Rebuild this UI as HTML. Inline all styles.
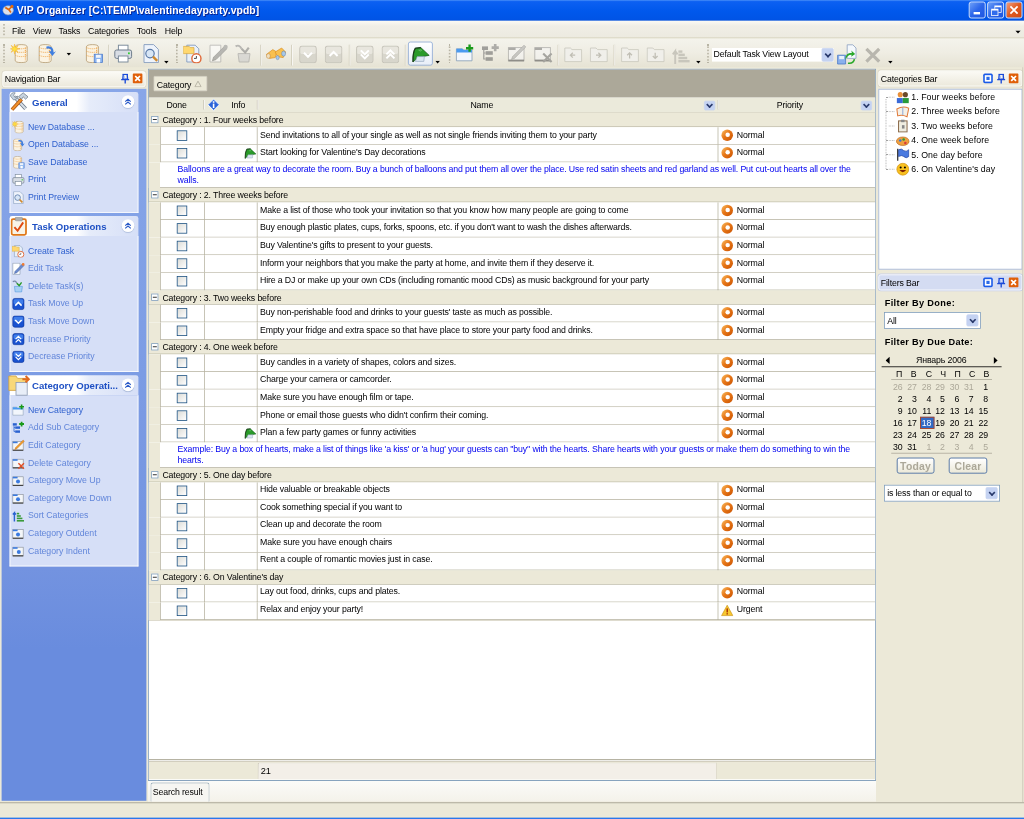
<!DOCTYPE html>
<html><head><meta charset="utf-8"><style>
html,body{margin:0;padding:0;width:1024px;height:819px;overflow:hidden;background:#ece9d8;}
#root{position:absolute;left:0;top:0;width:1280px;height:1024px;transform:scale(0.8);transform-origin:0 0;background:#ece9d8;overflow:hidden;
 font-family:"Liberation Sans",sans-serif;font-size:11.5px;color:#000;letter-spacing:-0.18px;line-height:13px;}
.a{position:absolute;}
.nw{white-space:nowrap;}
.b{font-weight:bold;letter-spacing:0.4px;}
#title{left:0;top:0;width:1280px;height:26px;background:linear-gradient(#4a90f8 0,#0c60f2 2px,#0058ec 14px,#0054e6 24px,#0050e0 26px);}
#title .t{left:21px;top:6px;color:#fff;font-weight:bold;font-size:13px;line-height:15px;letter-spacing:0.1px;text-shadow:1px 1px 0 #0a1e8a;}
.tb{top:2px;width:21px;height:21px;border:1px solid #fff;border-radius:3px;box-sizing:border-box;background:linear-gradient(135deg,#6ea0f8,#2c66ea 50%,#1d55e0);}
.tb.cl{background:linear-gradient(135deg,#f0a080,#e05a20 50%,#d04a10);}
#menu{left:0;top:26px;width:1280px;height:22px;background:linear-gradient(#fbfaf4,#f0eee6 30%,#eceae0);border-bottom:1px solid #ccc7b2;box-sizing:border-box;}
#menu span{position:absolute;top:6px;}
.grip{width:2px;border-left:2px dotted #b8b4a4;}
#tool{left:0;top:48px;width:1280px;height:36px;background:linear-gradient(#f4f3ec,#efede3 50%,#e6e3d4);}
.tsep{top:8px;width:1px;height:26px;background:#cfcbb8;border-right:1px solid #fff;}
.ddb{background:linear-gradient(#dce6fa,#b6c8f0);border:1px solid #b8c8f0;border-radius:2px;box-sizing:border-box;}
.ddb.hd{border-color:#c8d4f0;background:#c4d2f2;}
.ddb.hd::after{border-color:#28386a;border-width:0 2px 2px 0;width:4px;height:4px;}
.ddb::after{content:"";position:absolute;left:50%;top:50%;width:5px;height:5px;border-right:1.6px solid #4a5a88;border-bottom:1.6px solid #4a5a88;transform:translate(-50%,-70%) rotate(45deg);}
#navhdr{left:3px;top:89px;width:179px;height:20px;border:1px solid #fff;border-radius:3px;box-sizing:border-box;background:linear-gradient(#fbfaf5,#ece9dc);box-shadow:0 0 0 1px #dcd8c8;}
#navblue{left:2px;top:111px;width:181px;height:890px;background:linear-gradient(#88a6e8 0,#7e9ee5 300px,#7393e0 600px,#698cde 700px,#698cde 100%);}
.grp{position:absolute;left:12px;width:161px;background:#d6dff7;border:1px solid #fff;border-top:none;box-sizing:border-box;}
.gh{position:absolute;left:12px;width:161px;height:25px;background:linear-gradient(90deg,#fff 0,#fff 52%,#e6ecfa 62%,#d6dff7 100%);border-radius:3px 3px 0 0;}
.gh .tt{position:absolute;left:28px;top:6.5px;font-weight:bold;font-size:12px;color:#1e50c4;letter-spacing:0;}
.chev{width:16px;height:16px;border-radius:50%;background:#fff;box-shadow:0 1px 1px #a8b8d8;}
.it{position:absolute;left:35px;font-size:11.5px;white-space:nowrap;letter-spacing:-0.05px;transform:scaleX(0.953);transform-origin:0 0;}
#grid{left:185px;top:86px;width:910px;height:890px;background:#fff;border:1px solid #7f9db9;box-sizing:border-box;}
#groupby{left:186px;top:87px;width:908px;height:35px;background:#aca899;}
.catbtn{left:6px;top:8px;width:67px;height:19px;background:#ece9d8;border:1px solid #d8d4c8;box-sizing:border-box;border-radius:1px;}
#colhdr{left:186px;top:122px;width:908px;height:19px;background:#ebeadb;border-bottom:1px solid #d6d2c2;box-sizing:border-box;}
.hsep{top:3px;width:1px;height:12px;background:#cbc7b8;border-right:1px solid #fff;}
.grow{left:186px;width:908px;height:18px;background:#ece9d8;border-bottom:1px solid #bab6a4;box-sizing:border-box;}
.minus{left:3px;top:4px;width:9px;height:9px;border:1px solid #7f9db9;box-sizing:border-box;background:#fff;}
.minus::after{content:"";position:absolute;left:1px;top:3px;width:5px;height:1px;background:#000;}
.trow{left:186px;width:908px;height:22px;background:#fff;}
.trow .c1{left:0;top:0;width:14px;height:22px;background:#ece9d8;}
.trow .c2{left:14px;top:0;width:56px;height:22px;border-left:1px solid #bab6a4;border-right:1px solid #bab6a4;border-bottom:1px solid #bab6a4;box-sizing:border-box;}
.trow .c3{left:69px;top:0;width:67px;height:22px;border-right:1px solid #bab6a4;border-bottom:1px solid #bab6a4;box-sizing:border-box;}
.trow .c4{left:135px;top:0;width:577px;height:22px;border-right:1px solid #bab6a4;border-bottom:1px solid #bab6a4;box-sizing:border-box;}
.trow .c4 + div{}
.trow::after{content:"";position:absolute;left:711px;top:21px;width:197px;height:1px;background:#bab6a4;}
.chk{left:35px;top:4px;width:13px;height:13px;border:1px solid #1c5180;box-sizing:border-box;background:linear-gradient(135deg,#dcdcd7,#fff);}
.prow{left:186px;width:908px;height:32px;background:#fff;}
.prow::before{display:none;content:"";position:absolute;left:0;top:0;width:14px;height:32px;background:#ece9d8;}
.prow::after{display:none;content:"";position:absolute;left:14px;top:31px;width:894px;height:1px;background:#bab6a4;}
.pv{color:#0000f0;}
#footer{left:186px;top:949px;width:908px;height:25px;background:#ece9d8;border-top:1px solid #a8a494;box-shadow:inset 0 1px 0 #fff, inset 0 2px 0 #b8b4a4;box-sizing:border-box;}
.fcell{left:136px;top:3px;width:574px;height:21px;background:#f3efe8;border-left:1px solid #b4b0a0;border-top:1px solid #d8d4c4;border-right:1px solid #d8d4c4;border-radius:2px 0 0 0;box-sizing:border-box;}
#tabs{left:185px;top:975px;width:910px;height:27px;background:linear-gradient(#fbfbf9,#f4f2ea);border-top:1px solid #7f9db9;box-sizing:border-box;}
.tab{left:3px;top:2px;width:74px;height:24px;background:#f6f6f2;border:1px solid #91a7b4;border-bottom:none;border-radius:3px 3px 0 0;box-sizing:border-box;}
.phdr{left:1098px;width:180px;height:20px;border:1px solid #fff;border-radius:3px;box-sizing:border-box;background:linear-gradient(#fbfaf5,#ece9dc);box-shadow:0 0 0 1px #dcd8c8;}
.phdr.blue{background:#d4dcf2;box-shadow:0 0 0 1px #c8d0e8;}
#tree{left:1098px;top:111px;width:180px;height:226px;background:#fff;border:1px solid #9db0d0;box-sizing:border-box;}
.combo{background:#fff;border:1px solid #7f9db9;box-sizing:border-box;}
.btn{border:1px solid #3a62a0;border-radius:3px;box-sizing:border-box;background:linear-gradient(#fff,#ece9d8);color:#aca899;font-weight:bold;font-size:13px;letter-spacing:0.3px;}
#status{left:0;top:1003px;width:1280px;height:19px;background:#ece9d8;border-top:1px solid #9d9a8a;border-bottom:1px solid #f8f4d8;box-sizing:border-box;}
#bottomblue{left:0;top:1022px;width:1280px;height:2px;background:#2a78ec;}

.nw,#menu span{transform:scaleX(0.953);transform-origin:0 0;}
.nw.b,#title .t,.gh .tt{transform:none;}

</style></head><body><div id="root">
<div id="title" class="a">
<svg class="a" width="16" height="16" viewBox="0 0 18 18" style="left:3px;top:4px"><ellipse cx="8" cy="10" rx="7.5" ry="6.5" fill="#d8e0ec" stroke="#8a9ab8"/><path d="M4 6 L9 9 L13 5 M9 9 L12 13" stroke="#e06a10" stroke-width="2.4" fill="none"/><circle cx="13.5" cy="4.5" r="2.2" fill="#e06a10"/></svg>
<div class="a t nw">VIP Organizer [C:\TEMP\valentinedayparty.vpdb]</div>
<div class="a tb" style="left:1211px"><div class="a" style="left:5px;top:12px;width:8px;height:3px;background:#fff"></div></div>
<div class="a tb" style="left:1234px"><div class="a" style="left:8px;top:4px;width:7px;height:6px;border:1px solid #fff;border-top-width:2px"></div><div class="a" style="left:4px;top:8px;width:7px;height:6px;border:1px solid #fff;border-top-width:2px;background:#2f6cec"></div></div>
<div class="a tb cl" style="left:1257px"><svg class="a" width="19" height="19" viewBox="0 0 19 19" style="left:0;top:0"><path d="M5 5 L14 14 M14 5 L5 14" stroke="#fff" stroke-width="2.2"/></svg></div>
</div>
<div id="menu" class="a">
<div class="a grip" style="left:4px;top:4px;height:14px"></div>
<span style="left:15px">File</span>
<span style="left:41px">View</span>
<span style="left:73px">Tasks</span>
<span style="left:110px">Categories</span>
<span style="left:171px">Tools</span>
<span style="left:206px">Help</span>
<svg class="a" width="8" height="5" viewBox="0 0 8 5" style="left:1269px;top:12px"><path d="M0 0 H7 L3.5 4Z" fill="#000"/></svg>
</div>
<div id="tool" class="a">
<div class="a grip" style="left:4px;top:7px;height:24px"></div>
<div class="a grip" style="left:220px;top:7px;height:24px"></div>
<div class="a grip" style="left:561px;top:7px;height:24px"></div>
<div class="a grip" style="left:884px;top:7px;height:24px"></div>
<svg class="a" width="24" height="24" viewBox="0 0 16 16" style="left:13px;top:7px;"><g transform="translate(2,0) scale(1)"><path d="M2 2.5 Q2 0.5 7 0.5 Q12 0.5 12 2.5 L12 13.5 Q12 15.5 7 15.5 Q2 15.5 2 13.5Z" fill="#fbf3e2" stroke="#b8a078" stroke-width="0.7"/><path d="M2 6 Q7 8 12 6 M2 9.5 Q7 11.5 12 9.5 M2 3 Q7 5 12 3" fill="none" stroke="#f0a850" stroke-width="0.7" stroke-dasharray="1 0.6"/><path d="M10.5 3 V14" stroke="#f0b060" stroke-width="1" stroke-dasharray="1 0.8"/></g><path d="M3.5 0 L4.2 2.8 L6.5 1 L5 3.5 L8 4 L5 4.8 L6.5 7.5 L4.2 5.5 L3.5 8.5 L2.8 5.5 L0.5 7 L2 4.8 L-0.5 4 L2 3.5 L0.5 1 L2.8 2.8Z" fill="#ffe040" stroke="#f0a020" stroke-width="0.3"/></svg>
<svg class="a" width="24" height="24" viewBox="0 0 16 16" style="left:46px;top:7px;"><g transform="translate(0,0) scale(1)"><path d="M2 2.5 Q2 0.5 7 0.5 Q12 0.5 12 2.5 L12 13.5 Q12 15.5 7 15.5 Q2 15.5 2 13.5Z" fill="#fbf3e2" stroke="#b8a078" stroke-width="0.7"/><path d="M2 6 Q7 8 12 6 M2 9.5 Q7 11.5 12 9.5 M2 3 Q7 5 12 3" fill="none" stroke="#f0a850" stroke-width="0.7" stroke-dasharray="1 0.6"/><path d="M10.5 3 V14" stroke="#f0b060" stroke-width="1" stroke-dasharray="1 0.8"/></g><path d="M8 2 Q14 1 14 7 L16 6 L13 10 L10 6 L12 6 Q12 3 8 4Z" fill="#3f7ee0"/></svg>
<svg class="a" width="6" height="4" viewBox="0 0 6 4" style="left:83px;top:18px"><path d="M0 0 H6 L3 3.5Z" fill="#000"/></svg>
<svg class="a" width="24" height="24" viewBox="0 0 16 16" style="left:105px;top:7px;"><g transform="translate(0,0) scale(1)"><path d="M2 2.5 Q2 0.5 7 0.5 Q12 0.5 12 2.5 L12 13.5 Q12 15.5 7 15.5 Q2 15.5 2 13.5Z" fill="#fbf3e2" stroke="#b8a078" stroke-width="0.7"/><path d="M2 6 Q7 8 12 6 M2 9.5 Q7 11.5 12 9.5 M2 3 Q7 5 12 3" fill="none" stroke="#f0a850" stroke-width="0.7" stroke-dasharray="1 0.6"/><path d="M10.5 3 V14" stroke="#f0b060" stroke-width="1" stroke-dasharray="1 0.8"/></g><rect x="8.5" y="8.5" width="7" height="7" fill="#8ab4f0" stroke="#4a78c8" stroke-width="0.6"/><rect x="10" y="9" width="4" height="2.5" fill="#f0f4fa"/><rect x="10.5" y="12.5" width="3" height="3" fill="#fff"/></svg>
<div class="a tsep" style="left:135px"></div>
<svg class="a" width="24" height="24" viewBox="0 0 16 16" style="left:142px;top:7px;"><rect x="4" y="1" width="8" height="5" fill="#fff" stroke="#7a8a9a" stroke-width="0.8"/><rect x="1" y="5" width="14" height="7" rx="1.5" fill="#d8dde4" stroke="#6a7888" stroke-width="0.8"/><rect x="4" y="10" width="8" height="5" fill="#fff" stroke="#7a8a9a" stroke-width="0.8"/><rect x="12" y="7" width="1.5" height="1.5" fill="#3c3"/></svg>
<svg class="a" width="24" height="24" viewBox="0 0 16 16" style="left:177px;top:7px;"><path d="M2 0.5 H10 L14 4.5 V15.5 H2Z" fill="#eef3fb" stroke="#8aa0c0" stroke-width="0.8"/><circle cx="7" cy="8" r="3.5" fill="#d8e6f6" stroke="#5a7aa8" stroke-width="1"/><path d="M9.5 10.5 L13 14" stroke="#d08a30" stroke-width="2"/></svg>
<svg class="a" width="6" height="4" viewBox="0 0 6 4" style="left:205px;top:28px"><path d="M0 0 H6 L3 3.5Z" fill="#000"/></svg>
<svg class="a" width="24" height="24" viewBox="0 0 16 16" style="left:229px;top:7px;"><path d="M3 1 H10 L13 4 V15 H3Z" fill="#e8f0fa" stroke="#8aa0c0" stroke-width="0.8"/><path d="M0 2 H5 L6 3 H9 V8 H0Z" fill="#ffd870" stroke="#d8a840" stroke-width="0.6"/><circle cx="11" cy="12" r="3.8" fill="#fff" stroke="#e06a3a" stroke-width="1.2"/><path d="M11 10 V12 H9" stroke="#444" stroke-width="0.8" fill="none"/></svg>
<svg class="a" width="24" height="24" viewBox="0 0 16 16" style="left:261px;top:7px;filter:grayscale(1) opacity(0.55);"><path d="M1 1 H10 V15 H1Z" fill="#fff" stroke="#8a9ab0" stroke-width="0.8"/><path d="M13 2 L15 4 L6 13 L3 14 L4 11Z" fill="#6a8ad0" stroke="#3a5a98" stroke-width="0.6"/><circle cx="14" cy="2.5" r="1.8" fill="#f07a30"/></svg>
<svg class="a" width="24" height="24" viewBox="0 0 16 16" style="left:293px;top:7px;filter:grayscale(1) opacity(0.55);"><path d="M3 8 H13 L12 15 H4Z" fill="#a8d0f4" stroke="#5a9ae0" stroke-width="0.8"/><path d="M1 2 Q4 0 6 4" stroke="#7a8aa8" stroke-width="1.6" fill="none"/><path d="M6 4 L9 7 L12 3" stroke="#2a9a2a" stroke-width="1.8" fill="none"/></svg>
<div class="a tsep" style="left:325px"></div>
<svg class="a" width="26" height="24" viewBox="0 0 26 24" style="left:332px;top:8px"><path d="M1 12 L9 6 L14 9 L12 16 L5 17Z" fill="#f8c050" stroke="#d88a20" stroke-width="0.8"/><path d="M12 9 L20 4 L25 9 L22 16 L15 15Z" fill="#f8c050" stroke="#d88a20" stroke-width="0.8"/><ellipse cx="3.5" cy="14" rx="2.5" ry="3" fill="#f0e0c0" stroke="#c08030" stroke-width="0.6"/><ellipse cx="22.5" cy="11" rx="2.5" ry="3.2" fill="#a8c8e8" stroke="#5a80b0" stroke-width="0.6"/><ellipse cx="15" cy="16" rx="2" ry="2.6" fill="#a8c8e8" stroke="#5a80b0" stroke-width="0.6"/></svg>
<div class="a tsep" style="left:364px"></div>
<svg class="a" width="22" height="22" viewBox="0 0 22 22" style="left:374px;top:9px"><rect x="0.5" y="0.5" width="21" height="21" rx="3" fill="#d8d6cc" stroke="#c0beb4"/><rect x="1.5" y="1.5" width="19" height="9" rx="2" fill="#e8e6de"/><path d="M6 9 L11 14 L16 9" stroke="#fff" stroke-width="2.5" fill="none"/></svg>
<svg class="a" width="22" height="22" viewBox="0 0 22 22" style="left:406px;top:9px"><rect x="0.5" y="0.5" width="21" height="21" rx="3" fill="#d8d6cc" stroke="#c0beb4"/><rect x="1.5" y="1.5" width="19" height="9" rx="2" fill="#e8e6de"/><path d="M6 13 L11 8 L16 13" stroke="#fff" stroke-width="2.5" fill="none"/></svg>
<div class="a tsep" style="left:436px"></div>
<svg class="a" width="22" height="22" viewBox="0 0 22 22" style="left:445px;top:9px"><rect x="0.5" y="0.5" width="21" height="21" rx="3" fill="#d8d6cc" stroke="#c0beb4"/><rect x="1.5" y="1.5" width="19" height="9" rx="2" fill="#e8e6de"/><path d="M6 6 L11 11 L16 6 M6 11 L11 16 L16 11" stroke="#fff" stroke-width="2.5" fill="none"/></svg>
<svg class="a" width="22" height="22" viewBox="0 0 22 22" style="left:477px;top:9px"><rect x="0.5" y="0.5" width="21" height="21" rx="3" fill="#d8d6cc" stroke="#c0beb4"/><rect x="1.5" y="1.5" width="19" height="9" rx="2" fill="#e8e6de"/><path d="M6 11 L11 6 L16 11 M6 16 L11 11 L16 16" stroke="#fff" stroke-width="2.5" fill="none"/></svg>
<div class="a tsep" style="left:506px"></div>
<div class="a" style="left:510px;top:4px;width:31px;height:30px;border:1px solid #8aa8d8;border-radius:3px;background:linear-gradient(#fff,#e8eef8);box-sizing:border-box"></div>
<svg class="a" width="24" height="24" viewBox="0 0 16 16" style="left:514px;top:7px"><path d="M1.5 15 Q1.2 7 3.5 3.5 L8 3 L15 9.5 L6 11 Z" fill="#2a9a2a" stroke="#1a5a1a" stroke-width="0.6"/><path d="M3.5 14.5 L5 10.5 L11 10.5 L10.5 14.5 Z" fill="#dce6f2" stroke="#8aa0b8" stroke-width="0.5"/><path d="M1.5 15 Q1.2 7 3.5 3.5 L8 3" stroke="#1a3a1a" stroke-width="1" fill="none"/><path d="M6 5 L8 6 M7 4.5 L9 5.5" stroke="#8ad08a" stroke-width="0.5"/></svg>
<svg class="a" width="6" height="4" viewBox="0 0 6 4" style="left:544px;top:28px"><path d="M0 0 H6 L3 3.5Z" fill="#000"/></svg>
<svg class="a" width="24" height="24" viewBox="0 0 16 16" style="left:569px;top:7px;"><path d="M1 4 H6 L7 5 H14 V14 H1Z" fill="#f2f6fc" stroke="#8aa0b8" stroke-width="0.7"/><path d="M1 4 H6 L7 5 H14 V7 H1Z" fill="#4a9af0"/><path d="M12 0.5 V6.5 M9 3.5 H15" stroke="#1a9a1a" stroke-width="2"/></svg>
<svg class="a" width="24" height="24" viewBox="0 0 16 16" style="left:601px;top:7px;filter:grayscale(1) opacity(0.55);"><rect x="1" y="2" width="5" height="3" fill="#2a62d0"/><rect x="4" y="6" width="6" height="3" fill="#2a62d0"/><rect x="4" y="11" width="6" height="3" fill="#2a62d0"/><path d="M2.5 5 V12.5 H4 M2.5 7.5 H4" stroke="#2a62d0" stroke-width="1" fill="none"/><path d="M12 0 V6 M9 3 H15" stroke="#1a9a1a" stroke-width="2.2"/></svg>
<svg class="a" width="24" height="24" viewBox="0 0 16 16" style="left:634px;top:7px;filter:grayscale(1) opacity(0.55);"><rect x="1" y="3" width="13" height="11" fill="#f4f6f8" stroke="#8a9098" stroke-width="0.8"/><rect x="1" y="3" width="6" height="2" fill="#3a7ae0"/><rect x="1" y="13" width="13" height="1.5" fill="#444"/><path d="M14 1 L15.5 2.5 L6 12 L3.5 13 L4.5 10.5Z" fill="#f0a030" stroke="#c06010" stroke-width="0.5"/></svg>
<svg class="a" width="24" height="24" viewBox="0 0 16 16" style="left:667px;top:7px;filter:grayscale(1) opacity(0.55);"><rect x="1" y="3" width="13" height="11" fill="#f4f6f8" stroke="#8a9098" stroke-width="0.8"/><rect x="1" y="3" width="6" height="2" fill="#3a7ae0"/><rect x="1" y="13" width="13" height="1.5" fill="#444"/><path d="M8 8 L15 15 M15 8 L8 15" stroke="#e0502a" stroke-width="1.8"/></svg>
<div class="a tsep" style="left:697px"></div>
<svg class="a" width="24" height="22" viewBox="0 0 24 22" style="left:705px;top:9px"><path d="M1 3 H8 L10 5 H22 V20 H1Z" fill="#f0efea" stroke="#c8c6bc"/><path d="M14 12 H8 M11 9 L8 12 L11 15" stroke="#c0beb4" stroke-width="1.6" fill="none"/></svg>
<svg class="a" width="24" height="22" viewBox="0 0 24 22" style="left:737px;top:9px"><path d="M1 3 H8 L10 5 H22 V20 H1Z" fill="#f0efea" stroke="#c8c6bc"/><path d="M8 12 H14 M11 9 L14 12 L11 15" stroke="#c0beb4" stroke-width="1.6" fill="none"/></svg>
<div class="a tsep" style="left:767px"></div>
<svg class="a" width="24" height="22" viewBox="0 0 24 22" style="left:776px;top:9px"><path d="M1 3 H8 L10 5 H22 V20 H1Z" fill="#f0efea" stroke="#c8c6bc"/><path d="M11 16 V9 M8 12 L11 9 L14 12" stroke="#c0beb4" stroke-width="1.6" fill="none"/></svg>
<svg class="a" width="24" height="22" viewBox="0 0 24 22" style="left:808px;top:9px"><path d="M1 3 H8 L10 5 H22 V20 H1Z" fill="#f0efea" stroke="#c8c6bc"/><path d="M11 9 V16 M8 13 L11 16 L14 13" stroke="#c0beb4" stroke-width="1.6" fill="none"/></svg>
<svg class="a" width="26" height="24" viewBox="0 0 26 24" style="left:839px;top:10px"><path d="M5 22 V6 L2 10 M5 6 L8 10" stroke="#c8c6bc" stroke-width="2.4" fill="none"/><rect x="9" y="5" width="5" height="3" fill="#c8c6bc"/><rect x="9" y="9" width="8" height="3" fill="#c8c6bc"/><rect x="9" y="13" width="11" height="3" fill="#c8c6bc"/><rect x="9" y="17" width="14" height="3" fill="#c8c6bc"/></svg>
<svg class="a" width="6" height="4" viewBox="0 0 6 4" style="left:870px;top:28px"><path d="M0 0 H6 L3 3.5Z" fill="#000"/></svg>
<div class="a" style="left:890px;top:12px;width:152px;height:17px;background:#fff"></div>
<div class="a nw" style="left:892px;top:13px">Default Task View Layout</div>
<div class="a ddb hd" style="left:1027px;top:12px;width:15px;height:17px"></div>
<svg class="a" width="28" height="28" viewBox="0 0 28 28" style="left:1045px;top:7px"><path d="M14 1 H21 L25 5 V18 H14Z" fill="#f4f8fc" stroke="#8aa0c0"/><path d="M2 14 H12 V25 H2Z" fill="#8ab0ec" stroke="#4a78c8"/><rect x="4" y="15" width="6" height="4" fill="#e8f0fa"/><path d="M12 20 Q11 11 20 11 L19 8 L24 12.5 L19 16 L19.5 13.5 Q14 13.5 12 20Z" fill="#2aa82a"/><path d="M23 19 Q22 25 15 24" stroke="#2aa82a" stroke-width="2" fill="none"/></svg>
<svg class="a" width="22" height="22" viewBox="0 0 22 22" style="left:1080px;top:10px"><path d="M3 3 L19 19 M19 3 L3 19" stroke="#b8b6ae" stroke-width="4"/></svg>
<svg class="a" width="6" height="4" viewBox="0 0 6 4" style="left:1110px;top:28px"><path d="M0 0 H6 L3 3.5Z" fill="#000"/></svg>
</div>
<div id="navhdr" class="a"><div class="a nw" style="left:2px;top:3px;color:#000">Navigation Bar</div></div>
<svg class="a" width="11" height="13" viewBox="0 0 11 13" style="left:151px;top:92px"><path d="M2 1 H9 M3 1.5 L2.5 7 H8.5 L8 1.5 M0.5 7.5 H10.5 M5.5 8 V12.5" stroke="#1a4ad8" stroke-width="1.7" fill="none"/><path d="M4.5 2.5 V6" stroke="#a8c0f8" stroke-width="1.2"/></svg>
<div class="a" style="left:166px;top:92px;width:12px;height:12px;background:#e0600a;border-radius:1px"><svg class="a" width="12" height="12" viewBox="0 0 12 12" style="left:0;top:0"><path d="M3 3 L9 9 M9 3 L3 9" stroke="#fff" stroke-width="2.2"/></svg></div>
<div id="navblue" class="a"></div>
<div class="grp" style="top:140px;height:126px"></div>
<div class="gh" style="top:115px"><div class="tt nw">General</div><div class="a chev" style="left:140px;top:4px"><svg class="a" width="10" height="10" viewBox="0 0 10 10" style="left:3px;top:3px"><path d="M1.5 5 L5 2 L8.5 5 M1.5 8.5 L5 5.5 L8.5 8.5" stroke="#2a5ac8" stroke-width="1.4" fill="none"/></svg></div></div>
<svg class="a" width="25" height="24" viewBox="0 0 25 24" style="left:12px;top:115px"><path d="M6 6 L20 21" stroke="#6a7888" stroke-width="4.5"/><path d="M6 6 L20 21" stroke="#d8e0e8" stroke-width="2.5"/><path d="M1 5 Q2 0 7 1 L5 4 L7 7 L10 5 Q10 10 5 10Z" fill="#c8d4e0" stroke="#6a7888" stroke-width="0.8"/><path d="M3 22 L15 9" stroke="#a85010" stroke-width="4.5"/><path d="M3 22 L15 9" stroke="#f0902a" stroke-width="2.6"/><path d="M11 6 L17 1 L23 6 L20 9 L17 6 L15 9Z" fill="#c8d4e0" stroke="#5a6878" stroke-width="0.8"/></svg>
<svg class="a" width="16" height="16" viewBox="0 0 16 16" style="left:15px;top:151px;"><g transform="translate(2,0) scale(1)"><path d="M2 2.5 Q2 0.5 7 0.5 Q12 0.5 12 2.5 L12 13.5 Q12 15.5 7 15.5 Q2 15.5 2 13.5Z" fill="#fbf3e2" stroke="#b8a078" stroke-width="0.7"/><path d="M2 6 Q7 8 12 6 M2 9.5 Q7 11.5 12 9.5 M2 3 Q7 5 12 3" fill="none" stroke="#f0a850" stroke-width="0.7" stroke-dasharray="1 0.6"/><path d="M10.5 3 V14" stroke="#f0b060" stroke-width="1" stroke-dasharray="1 0.8"/></g><path d="M3.5 0 L4.2 2.8 L6.5 1 L5 3.5 L8 4 L5 4.8 L6.5 7.5 L4.2 5.5 L3.5 8.5 L2.8 5.5 L0.5 7 L2 4.8 L-0.5 4 L2 3.5 L0.5 1 L2.8 2.8Z" fill="#ffe040" stroke="#f0a020" stroke-width="0.3"/></svg>
<div class="it" style="top:152px;color:#2d5fce">New Database ...</div>
<svg class="a" width="16" height="16" viewBox="0 0 16 16" style="left:15px;top:173px;"><g transform="translate(0,0) scale(1)"><path d="M2 2.5 Q2 0.5 7 0.5 Q12 0.5 12 2.5 L12 13.5 Q12 15.5 7 15.5 Q2 15.5 2 13.5Z" fill="#fbf3e2" stroke="#b8a078" stroke-width="0.7"/><path d="M2 6 Q7 8 12 6 M2 9.5 Q7 11.5 12 9.5 M2 3 Q7 5 12 3" fill="none" stroke="#f0a850" stroke-width="0.7" stroke-dasharray="1 0.6"/><path d="M10.5 3 V14" stroke="#f0b060" stroke-width="1" stroke-dasharray="1 0.8"/></g><path d="M8 2 Q14 1 14 7 L16 6 L13 10 L10 6 L12 6 Q12 3 8 4Z" fill="#3f7ee0"/></svg>
<div class="it" style="top:174px;color:#2d5fce">Open Database ...</div>
<svg class="a" width="16" height="16" viewBox="0 0 16 16" style="left:15px;top:195px;"><g transform="translate(0,0) scale(1)"><path d="M2 2.5 Q2 0.5 7 0.5 Q12 0.5 12 2.5 L12 13.5 Q12 15.5 7 15.5 Q2 15.5 2 13.5Z" fill="#fbf3e2" stroke="#b8a078" stroke-width="0.7"/><path d="M2 6 Q7 8 12 6 M2 9.5 Q7 11.5 12 9.5 M2 3 Q7 5 12 3" fill="none" stroke="#f0a850" stroke-width="0.7" stroke-dasharray="1 0.6"/><path d="M10.5 3 V14" stroke="#f0b060" stroke-width="1" stroke-dasharray="1 0.8"/></g><rect x="8.5" y="8.5" width="7" height="7" fill="#8ab4f0" stroke="#4a78c8" stroke-width="0.6"/><rect x="10" y="9" width="4" height="2.5" fill="#f0f4fa"/><rect x="10.5" y="12.5" width="3" height="3" fill="#fff"/></svg>
<div class="it" style="top:196px;color:#2d5fce">Save Database</div>
<svg class="a" width="16" height="16" viewBox="0 0 16 16" style="left:15px;top:217px;"><rect x="4" y="1" width="8" height="5" fill="#fff" stroke="#7a8a9a" stroke-width="0.8"/><rect x="1" y="5" width="14" height="7" rx="1.5" fill="#d8dde4" stroke="#6a7888" stroke-width="0.8"/><rect x="4" y="10" width="8" height="5" fill="#fff" stroke="#7a8a9a" stroke-width="0.8"/><rect x="12" y="7" width="1.5" height="1.5" fill="#3c3"/></svg>
<div class="it" style="top:218px;color:#2d5fce">Print</div>
<svg class="a" width="16" height="16" viewBox="0 0 16 16" style="left:15px;top:239px;"><path d="M2 0.5 H10 L14 4.5 V15.5 H2Z" fill="#eef3fb" stroke="#8aa0c0" stroke-width="0.8"/><circle cx="7" cy="8" r="3.5" fill="#d8e6f6" stroke="#5a7aa8" stroke-width="1"/><path d="M9.5 10.5 L13 14" stroke="#d08a30" stroke-width="2"/></svg>
<div class="it" style="top:240px;color:#2d5fce">Print Preview</div>
<div class="grp" style="top:295px;height:170px"></div>
<div class="gh" style="top:270px"><div class="tt nw">Task Operations</div><div class="a chev" style="left:140px;top:4px"><svg class="a" width="10" height="10" viewBox="0 0 10 10" style="left:3px;top:3px"><path d="M1.5 5 L5 2 L8.5 5 M1.5 8.5 L5 5.5 L8.5 8.5" stroke="#2a5ac8" stroke-width="1.4" fill="none"/></svg></div></div>
<svg class="a" width="22" height="24" viewBox="0 0 22 24" style="left:13px;top:271px"><rect x="1.5" y="3" width="18" height="19.5" rx="2" fill="#f8f4e8" stroke="#e0781a" stroke-width="2.2"/><rect x="6" y="0.5" width="9" height="4.5" rx="1" fill="#b0b0b0" stroke="#808080" stroke-width="0.6"/><path d="M5 13 L9 17.5 L16 7" stroke="#e04a10" stroke-width="2.4" fill="none"/></svg>
<svg class="a" width="16" height="16" viewBox="0 0 16 16" style="left:15px;top:306px;"><path d="M3 1 H10 L13 4 V15 H3Z" fill="#e8f0fa" stroke="#8aa0c0" stroke-width="0.8"/><path d="M0 2 H5 L6 3 H9 V8 H0Z" fill="#ffd870" stroke="#d8a840" stroke-width="0.6"/><circle cx="11" cy="12" r="3.8" fill="#fff" stroke="#e06a3a" stroke-width="1.2"/><path d="M11 10 V12 H9" stroke="#444" stroke-width="0.8" fill="none"/></svg>
<div class="it" style="top:307px;color:#2d5fce">Create Task</div>
<svg class="a" width="16" height="16" viewBox="0 0 16 16" style="left:15px;top:328px;"><path d="M1 1 H10 V15 H1Z" fill="#fff" stroke="#8a9ab0" stroke-width="0.8"/><path d="M13 2 L15 4 L6 13 L3 14 L4 11Z" fill="#6a8ad0" stroke="#3a5a98" stroke-width="0.6"/><circle cx="14" cy="2.5" r="1.8" fill="#f07a30"/></svg>
<div class="it" style="top:329px;color:#6286da">Edit Task</div>
<svg class="a" width="16" height="16" viewBox="0 0 16 16" style="left:15px;top:350px;"><path d="M3 8 H13 L12 15 H4Z" fill="#a8d0f4" stroke="#5a9ae0" stroke-width="0.8"/><path d="M1 2 Q4 0 6 4" stroke="#7a8aa8" stroke-width="1.6" fill="none"/><path d="M6 4 L9 7 L12 3" stroke="#2a9a2a" stroke-width="1.8" fill="none"/></svg>
<div class="it" style="top:351px;color:#6286da">Delete Task(s)</div>
<svg class="a" width="16" height="16" viewBox="0 0 16 16" style="left:15px;top:372px;"><rect x="1" y="1" width="14" height="14" rx="2.5" fill="#1a52d0" stroke="#0c3498" stroke-width="0.8"/><rect x="2" y="2" width="12" height="6" rx="2" fill="#4a88f0" opacity="0.8"/><path d="M4 10 L8 6 L12 10" stroke="#fff" stroke-width="2" fill="none"/></svg>
<div class="it" style="top:373px;color:#6286da">Task Move Up</div>
<svg class="a" width="16" height="16" viewBox="0 0 16 16" style="left:15px;top:394px;"><rect x="1" y="1" width="14" height="14" rx="2.5" fill="#1a52d0" stroke="#0c3498" stroke-width="0.8"/><rect x="2" y="2" width="12" height="6" rx="2" fill="#4a88f0" opacity="0.8"/><path d="M4 6 L8 10 L12 6" stroke="#fff" stroke-width="2" fill="none"/></svg>
<div class="it" style="top:395px;color:#6286da">Task Move Down</div>
<svg class="a" width="16" height="16" viewBox="0 0 16 16" style="left:15px;top:416px;"><rect x="1" y="1" width="14" height="14" rx="2.5" fill="#1a52d0" stroke="#0c3498" stroke-width="0.8"/><rect x="2" y="2" width="12" height="6" rx="2" fill="#4a88f0" opacity="0.8"/><path d="M4.5 8 L8 4.5 L11.5 8 M4.5 12 L8 8.5 L11.5 12" stroke="#fff" stroke-width="1.5" fill="none"/></svg>
<div class="it" style="top:417px;color:#6286da">Increase Priority</div>
<svg class="a" width="16" height="16" viewBox="0 0 16 16" style="left:15px;top:438px;"><rect x="1" y="1" width="14" height="14" rx="2.5" fill="#1a52d0" stroke="#0c3498" stroke-width="0.8"/><rect x="2" y="2" width="12" height="6" rx="2" fill="#4a88f0" opacity="0.8"/><path d="M4.5 4 L8 7.5 L11.5 4 M4.5 8 L8 11.5 L11.5 8" stroke="#fff" stroke-width="1.5" fill="none"/></svg>
<div class="it" style="top:439px;color:#6286da">Decrease Priority</div>
<div class="grp" style="top:494px;height:214px"></div>
<div class="gh" style="top:469px"><div class="tt nw">Category Operati...</div><div class="a chev" style="left:140px;top:4px"><svg class="a" width="10" height="10" viewBox="0 0 10 10" style="left:3px;top:3px"><path d="M1.5 5 L5 2 L8.5 5 M1.5 8.5 L5 5.5 L8.5 8.5" stroke="#2a5ac8" stroke-width="1.4" fill="none"/></svg></div></div>
<svg class="a" width="30" height="30" viewBox="0 0 30 30" style="left:10px;top:466px"><path d="M1 4 H10 L12 7 H22 V22 H1Z" fill="#f8d878" stroke="#d0a040"/><rect x="10" y="12" width="14" height="16" fill="#e8eef8" stroke="#8a98b0"/><path d="M18 8 H26 M22 4 L26 8 L22 12" stroke="#e06a20" stroke-width="2.5" fill="none"/></svg>
<svg class="a" width="16" height="16" viewBox="0 0 16 16" style="left:15px;top:505px;"><path d="M1 4 H6 L7 5 H14 V14 H1Z" fill="#f2f6fc" stroke="#8aa0b8" stroke-width="0.7"/><path d="M1 4 H6 L7 5 H14 V7 H1Z" fill="#4a9af0"/><path d="M12 0.5 V6.5 M9 3.5 H15" stroke="#1a9a1a" stroke-width="2"/></svg>
<div class="it" style="top:506px;color:#2d5fce">New Category</div>
<svg class="a" width="16" height="16" viewBox="0 0 16 16" style="left:15px;top:527px;"><rect x="1" y="2" width="5" height="3" fill="#2a62d0"/><rect x="4" y="6" width="6" height="3" fill="#2a62d0"/><rect x="4" y="11" width="6" height="3" fill="#2a62d0"/><path d="M2.5 5 V12.5 H4 M2.5 7.5 H4" stroke="#2a62d0" stroke-width="1" fill="none"/><path d="M12 0 V6 M9 3 H15" stroke="#1a9a1a" stroke-width="2.2"/></svg>
<div class="it" style="top:528px;color:#6286da">Add Sub Category</div>
<svg class="a" width="16" height="16" viewBox="0 0 16 16" style="left:15px;top:549px;"><rect x="1" y="3" width="13" height="11" fill="#f4f6f8" stroke="#8a9098" stroke-width="0.8"/><rect x="1" y="3" width="6" height="2" fill="#3a7ae0"/><rect x="1" y="13" width="13" height="1.5" fill="#444"/><path d="M14 1 L15.5 2.5 L6 12 L3.5 13 L4.5 10.5Z" fill="#f0a030" stroke="#c06010" stroke-width="0.5"/></svg>
<div class="it" style="top:550px;color:#6286da">Edit Category</div>
<svg class="a" width="16" height="16" viewBox="0 0 16 16" style="left:15px;top:571px;"><rect x="1" y="3" width="13" height="11" fill="#f4f6f8" stroke="#8a9098" stroke-width="0.8"/><rect x="1" y="3" width="6" height="2" fill="#3a7ae0"/><rect x="1" y="13" width="13" height="1.5" fill="#444"/><path d="M8 8 L15 15 M15 8 L8 15" stroke="#e0502a" stroke-width="1.8"/></svg>
<div class="it" style="top:572px;color:#6286da">Delete Category</div>
<svg class="a" width="16" height="16" viewBox="0 0 16 16" style="left:15px;top:593px;"><rect x="1" y="3" width="13" height="11" fill="#f4f6f8" stroke="#8a9098" stroke-width="0.8"/><rect x="1" y="3" width="6" height="2" fill="#3a7ae0"/><rect x="1" y="13" width="13" height="1.5" fill="#444"/><circle cx="7.5" cy="9" r="2.5" fill="#3a7ae0"/></svg>
<div class="it" style="top:594px;color:#6286da">Category Move Up</div>
<svg class="a" width="16" height="16" viewBox="0 0 16 16" style="left:15px;top:615px;"><rect x="1" y="3" width="13" height="11" fill="#f4f6f8" stroke="#8a9098" stroke-width="0.8"/><rect x="1" y="3" width="6" height="2" fill="#3a7ae0"/><rect x="1" y="13" width="13" height="1.5" fill="#444"/><circle cx="7.5" cy="9" r="2.5" fill="#3a7ae0"/></svg>
<div class="it" style="top:616px;color:#6286da">Category Move Down</div>
<svg class="a" width="16" height="16" viewBox="0 0 16 16" style="left:15px;top:637px;"><path d="M3 15 V4 L1 6 M3 4 L5 6" stroke="#2a62d0" stroke-width="1.8" fill="none"/><rect x="6" y="4" width="3" height="2" fill="#3a9a3a"/><rect x="6" y="7" width="5" height="2" fill="#3a9a3a"/><rect x="6" y="10" width="7" height="2" fill="#3a9a3a"/><rect x="6" y="13" width="9" height="2" fill="#3a9a3a"/></svg>
<div class="it" style="top:638px;color:#6286da">Sort Categories</div>
<svg class="a" width="16" height="16" viewBox="0 0 16 16" style="left:15px;top:659px;"><rect x="1" y="3" width="13" height="11" fill="#f4f6f8" stroke="#8a9098" stroke-width="0.8"/><rect x="1" y="3" width="6" height="2" fill="#3a7ae0"/><rect x="1" y="13" width="13" height="1.5" fill="#444"/><circle cx="7.5" cy="9" r="2.5" fill="#3a7ae0"/></svg>
<div class="it" style="top:660px;color:#6286da">Category Outdent</div>
<svg class="a" width="16" height="16" viewBox="0 0 16 16" style="left:15px;top:681px;"><rect x="1" y="3" width="13" height="11" fill="#f4f6f8" stroke="#8a9098" stroke-width="0.8"/><rect x="1" y="3" width="6" height="2" fill="#3a7ae0"/><rect x="1" y="13" width="13" height="1.5" fill="#444"/><circle cx="8.5" cy="9" r="2.5" fill="#3a7ae0"/></svg>
<div class="it" style="top:682px;color:#6286da">Category Indent</div>
<div id="grid" class="a"></div>
<div id="groupby" class="a"><div class="a catbtn"><span class="a nw" style="left:3px;top:4px">Category</span><svg class="a" width="9" height="8" viewBox="0 0 9 8" style="left:50px;top:5px"><path d="M0.5 7.5 L4.5 0.5 L8.5 7.5Z" fill="none" stroke="#aca899"/></svg></div></div>
<div id="colhdr" class="a">
<div class="a nw" style="left:22px;top:3px">Done</div>
<div class="a hsep" style="left:68px"></div>
<svg class="a" width="16" height="16" viewBox="0 0 16 16" style="left:73px;top:1px"><path d="M8 0.8 L15.2 8 L8 15.2 L0.8 8Z" fill="#2a62d8" stroke="#fff" stroke-width="1.2"/><path d="M8 1.8 L14.2 8 L8 14.2 L1.8 8Z" fill="none" stroke="#8ab0f0" stroke-width="0.6"/><rect x="7" y="6.5" width="2" height="5.5" fill="#fff"/><rect x="7" y="3.5" width="2" height="2" fill="#fff"/></svg>
<div class="a nw" style="left:103px;top:3px">Info</div>
<div class="a hsep" style="left:135px"></div>
<div class="a nw" style="left:402px;top:3px">Name</div>
<div class="a ddb hd" style="left:694px;top:4px;width:14px;height:12px"></div>
<div class="a hsep" style="left:711px"></div>
<div class="a nw" style="left:785px;top:3px">Priority</div>
<div class="a ddb hd" style="left:890px;top:4px;width:14px;height:12px"></div>
</div>
<div class="a" style="left:0;top:0">
<div class="a grow" style="top:141px"><div class="a minus"></div><div class="a nw" style="left:17px;top:3px">Category : 1. Four weeks before</div></div>
<div class="a trow" style="top:159px"><div class="a c1"></div><div class="a c2"></div><div class="a c3"></div><div class="a c4"></div><div class="a chk"></div><div class="a nw" style="left:139px;top:3px">Send invitations to all of your single as well as not single friends inviting them to your party</div>
<svg class="a" width="16" height="16" viewBox="0 0 16 16" style="left:715px;top:2px"><defs><linearGradient id="pg" x1="0" y1="0" x2="1" y2="1"><stop offset="0" stop-color="#f8c068"/><stop offset="0.45" stop-color="#e87818"/><stop offset="1" stop-color="#c85000"/></linearGradient></defs><circle cx="8" cy="8" r="7.2" fill="url(#pg)"/><circle cx="8.6" cy="7.4" r="2.8" fill="#fff"/></svg><div class="a nw" style="left:735px;top:3px">Normal</div>
</div>
<div class="a trow" style="top:181px"><div class="a c1"></div><div class="a c2"></div><div class="a c3"></div><div class="a c4"></div><div class="a chk"></div><div class="a nw" style="left:139px;top:3px">Start looking for Valentine&#x27;s Day decorations</div>
<svg class="a" width="16" height="16" viewBox="0 0 16 16" style="left:119px;top:2px"><path d="M1.5 15 Q1.2 7 3.5 3.5 L8 3 L15 9.5 L6 11 Z" fill="#2a9a2a" stroke="#1a5a1a" stroke-width="0.6"/><path d="M3.5 14.5 L5 10.5 L11 10.5 L10.5 14.5 Z" fill="#dce6f2" stroke="#8aa0b8" stroke-width="0.5"/><path d="M1.5 15 Q1.2 7 3.5 3.5 L8 3" stroke="#1a3a1a" stroke-width="1" fill="none"/><path d="M6 5 L8 6 M7 4.5 L9 5.5" stroke="#8ad08a" stroke-width="0.5"/></svg>
<svg class="a" width="16" height="16" viewBox="0 0 16 16" style="left:715px;top:2px"><defs><linearGradient id="pg" x1="0" y1="0" x2="1" y2="1"><stop offset="0" stop-color="#f8c068"/><stop offset="0.45" stop-color="#e87818"/><stop offset="1" stop-color="#c85000"/></linearGradient></defs><circle cx="8" cy="8" r="7.2" fill="url(#pg)"/><circle cx="8.6" cy="7.4" r="2.8" fill="#fff"/></svg><div class="a nw" style="left:735px;top:3px">Normal</div>
</div>
<div class="a prow" style="top:203px;height:32px"><div class="a" style="left:0;top:0;width:14px;height:32px;background:#ece9d8"></div><div class="a" style="left:14px;top:31px;width:894px;height:1px;background:#bab6a4"></div><div class="a nw pv" style="left:36px;top:2px">Balloons are a great way to decorate the room. Buy a bunch of balloons and put them all over the place. Use red satin sheets and red garland as well. Put cut-out hearts all over the</div><div class="a nw pv" style="left:36px;top:16px">walls.</div></div>
<div class="a grow" style="top:235px"><div class="a minus"></div><div class="a nw" style="left:17px;top:3px">Category : 2. Three weeks before</div></div>
<div class="a trow" style="top:253px"><div class="a c1"></div><div class="a c2"></div><div class="a c3"></div><div class="a c4"></div><div class="a chk"></div><div class="a nw" style="left:139px;top:3px">Make a list of those who took your invitation so that you know how many people are going to come</div>
<svg class="a" width="16" height="16" viewBox="0 0 16 16" style="left:715px;top:2px"><defs><linearGradient id="pg" x1="0" y1="0" x2="1" y2="1"><stop offset="0" stop-color="#f8c068"/><stop offset="0.45" stop-color="#e87818"/><stop offset="1" stop-color="#c85000"/></linearGradient></defs><circle cx="8" cy="8" r="7.2" fill="url(#pg)"/><circle cx="8.6" cy="7.4" r="2.8" fill="#fff"/></svg><div class="a nw" style="left:735px;top:3px">Normal</div>
</div>
<div class="a trow" style="top:275px"><div class="a c1"></div><div class="a c2"></div><div class="a c3"></div><div class="a c4"></div><div class="a chk"></div><div class="a nw" style="left:139px;top:3px">Buy enough plastic plates, cups, forks, spoons, etc. if you don&#x27;t want to wash the dishes afterwards.</div>
<svg class="a" width="16" height="16" viewBox="0 0 16 16" style="left:715px;top:2px"><defs><linearGradient id="pg" x1="0" y1="0" x2="1" y2="1"><stop offset="0" stop-color="#f8c068"/><stop offset="0.45" stop-color="#e87818"/><stop offset="1" stop-color="#c85000"/></linearGradient></defs><circle cx="8" cy="8" r="7.2" fill="url(#pg)"/><circle cx="8.6" cy="7.4" r="2.8" fill="#fff"/></svg><div class="a nw" style="left:735px;top:3px">Normal</div>
</div>
<div class="a trow" style="top:297px"><div class="a c1"></div><div class="a c2"></div><div class="a c3"></div><div class="a c4"></div><div class="a chk"></div><div class="a nw" style="left:139px;top:3px">Buy Valentine&#x27;s gifts to present to your guests.</div>
<svg class="a" width="16" height="16" viewBox="0 0 16 16" style="left:715px;top:2px"><defs><linearGradient id="pg" x1="0" y1="0" x2="1" y2="1"><stop offset="0" stop-color="#f8c068"/><stop offset="0.45" stop-color="#e87818"/><stop offset="1" stop-color="#c85000"/></linearGradient></defs><circle cx="8" cy="8" r="7.2" fill="url(#pg)"/><circle cx="8.6" cy="7.4" r="2.8" fill="#fff"/></svg><div class="a nw" style="left:735px;top:3px">Normal</div>
</div>
<div class="a trow" style="top:319px"><div class="a c1"></div><div class="a c2"></div><div class="a c3"></div><div class="a c4"></div><div class="a chk"></div><div class="a nw" style="left:139px;top:3px">Inform your neighbors that you make the party at home, and invite them if they deserve it.</div>
<svg class="a" width="16" height="16" viewBox="0 0 16 16" style="left:715px;top:2px"><defs><linearGradient id="pg" x1="0" y1="0" x2="1" y2="1"><stop offset="0" stop-color="#f8c068"/><stop offset="0.45" stop-color="#e87818"/><stop offset="1" stop-color="#c85000"/></linearGradient></defs><circle cx="8" cy="8" r="7.2" fill="url(#pg)"/><circle cx="8.6" cy="7.4" r="2.8" fill="#fff"/></svg><div class="a nw" style="left:735px;top:3px">Normal</div>
</div>
<div class="a trow" style="top:341px"><div class="a c1"></div><div class="a c2"></div><div class="a c3"></div><div class="a c4"></div><div class="a chk"></div><div class="a nw" style="left:139px;top:3px">Hire a DJ or make up your own CDs (including romantic mood CDs) as music background for your party</div>
<svg class="a" width="16" height="16" viewBox="0 0 16 16" style="left:715px;top:2px"><defs><linearGradient id="pg" x1="0" y1="0" x2="1" y2="1"><stop offset="0" stop-color="#f8c068"/><stop offset="0.45" stop-color="#e87818"/><stop offset="1" stop-color="#c85000"/></linearGradient></defs><circle cx="8" cy="8" r="7.2" fill="url(#pg)"/><circle cx="8.6" cy="7.4" r="2.8" fill="#fff"/></svg><div class="a nw" style="left:735px;top:3px">Normal</div>
</div>
<div class="a grow" style="top:363px"><div class="a minus"></div><div class="a nw" style="left:17px;top:3px">Category : 3. Two weeks before</div></div>
<div class="a trow" style="top:381px"><div class="a c1"></div><div class="a c2"></div><div class="a c3"></div><div class="a c4"></div><div class="a chk"></div><div class="a nw" style="left:139px;top:3px">Buy non-perishable food and drinks to your guests&#x27; taste as much as possible.</div>
<svg class="a" width="16" height="16" viewBox="0 0 16 16" style="left:715px;top:2px"><defs><linearGradient id="pg" x1="0" y1="0" x2="1" y2="1"><stop offset="0" stop-color="#f8c068"/><stop offset="0.45" stop-color="#e87818"/><stop offset="1" stop-color="#c85000"/></linearGradient></defs><circle cx="8" cy="8" r="7.2" fill="url(#pg)"/><circle cx="8.6" cy="7.4" r="2.8" fill="#fff"/></svg><div class="a nw" style="left:735px;top:3px">Normal</div>
</div>
<div class="a trow" style="top:403px"><div class="a c1"></div><div class="a c2"></div><div class="a c3"></div><div class="a c4"></div><div class="a chk"></div><div class="a nw" style="left:139px;top:3px">Empty your fridge and extra space so that have place to store your party food and drinks.</div>
<svg class="a" width="16" height="16" viewBox="0 0 16 16" style="left:715px;top:2px"><defs><linearGradient id="pg" x1="0" y1="0" x2="1" y2="1"><stop offset="0" stop-color="#f8c068"/><stop offset="0.45" stop-color="#e87818"/><stop offset="1" stop-color="#c85000"/></linearGradient></defs><circle cx="8" cy="8" r="7.2" fill="url(#pg)"/><circle cx="8.6" cy="7.4" r="2.8" fill="#fff"/></svg><div class="a nw" style="left:735px;top:3px">Normal</div>
</div>
<div class="a grow" style="top:425px"><div class="a minus"></div><div class="a nw" style="left:17px;top:3px">Category : 4. One week before</div></div>
<div class="a trow" style="top:443px"><div class="a c1"></div><div class="a c2"></div><div class="a c3"></div><div class="a c4"></div><div class="a chk"></div><div class="a nw" style="left:139px;top:3px">Buy candles in a variety of shapes, colors and sizes.</div>
<svg class="a" width="16" height="16" viewBox="0 0 16 16" style="left:715px;top:2px"><defs><linearGradient id="pg" x1="0" y1="0" x2="1" y2="1"><stop offset="0" stop-color="#f8c068"/><stop offset="0.45" stop-color="#e87818"/><stop offset="1" stop-color="#c85000"/></linearGradient></defs><circle cx="8" cy="8" r="7.2" fill="url(#pg)"/><circle cx="8.6" cy="7.4" r="2.8" fill="#fff"/></svg><div class="a nw" style="left:735px;top:3px">Normal</div>
</div>
<div class="a trow" style="top:465px"><div class="a c1"></div><div class="a c2"></div><div class="a c3"></div><div class="a c4"></div><div class="a chk"></div><div class="a nw" style="left:139px;top:3px">Charge your camera or camcorder.</div>
<svg class="a" width="16" height="16" viewBox="0 0 16 16" style="left:715px;top:2px"><defs><linearGradient id="pg" x1="0" y1="0" x2="1" y2="1"><stop offset="0" stop-color="#f8c068"/><stop offset="0.45" stop-color="#e87818"/><stop offset="1" stop-color="#c85000"/></linearGradient></defs><circle cx="8" cy="8" r="7.2" fill="url(#pg)"/><circle cx="8.6" cy="7.4" r="2.8" fill="#fff"/></svg><div class="a nw" style="left:735px;top:3px">Normal</div>
</div>
<div class="a trow" style="top:487px"><div class="a c1"></div><div class="a c2"></div><div class="a c3"></div><div class="a c4"></div><div class="a chk"></div><div class="a nw" style="left:139px;top:3px">Make sure you have enough film or tape.</div>
<svg class="a" width="16" height="16" viewBox="0 0 16 16" style="left:715px;top:2px"><defs><linearGradient id="pg" x1="0" y1="0" x2="1" y2="1"><stop offset="0" stop-color="#f8c068"/><stop offset="0.45" stop-color="#e87818"/><stop offset="1" stop-color="#c85000"/></linearGradient></defs><circle cx="8" cy="8" r="7.2" fill="url(#pg)"/><circle cx="8.6" cy="7.4" r="2.8" fill="#fff"/></svg><div class="a nw" style="left:735px;top:3px">Normal</div>
</div>
<div class="a trow" style="top:509px"><div class="a c1"></div><div class="a c2"></div><div class="a c3"></div><div class="a c4"></div><div class="a chk"></div><div class="a nw" style="left:139px;top:3px">Phone or email those guests who didn&#x27;t confirm their coming.</div>
<svg class="a" width="16" height="16" viewBox="0 0 16 16" style="left:715px;top:2px"><defs><linearGradient id="pg" x1="0" y1="0" x2="1" y2="1"><stop offset="0" stop-color="#f8c068"/><stop offset="0.45" stop-color="#e87818"/><stop offset="1" stop-color="#c85000"/></linearGradient></defs><circle cx="8" cy="8" r="7.2" fill="url(#pg)"/><circle cx="8.6" cy="7.4" r="2.8" fill="#fff"/></svg><div class="a nw" style="left:735px;top:3px">Normal</div>
</div>
<div class="a trow" style="top:531px"><div class="a c1"></div><div class="a c2"></div><div class="a c3"></div><div class="a c4"></div><div class="a chk"></div><div class="a nw" style="left:139px;top:3px">Plan a few party games or funny activities</div>
<svg class="a" width="16" height="16" viewBox="0 0 16 16" style="left:119px;top:2px"><path d="M1.5 15 Q1.2 7 3.5 3.5 L8 3 L15 9.5 L6 11 Z" fill="#2a9a2a" stroke="#1a5a1a" stroke-width="0.6"/><path d="M3.5 14.5 L5 10.5 L11 10.5 L10.5 14.5 Z" fill="#dce6f2" stroke="#8aa0b8" stroke-width="0.5"/><path d="M1.5 15 Q1.2 7 3.5 3.5 L8 3" stroke="#1a3a1a" stroke-width="1" fill="none"/><path d="M6 5 L8 6 M7 4.5 L9 5.5" stroke="#8ad08a" stroke-width="0.5"/></svg>
<svg class="a" width="16" height="16" viewBox="0 0 16 16" style="left:715px;top:2px"><defs><linearGradient id="pg" x1="0" y1="0" x2="1" y2="1"><stop offset="0" stop-color="#f8c068"/><stop offset="0.45" stop-color="#e87818"/><stop offset="1" stop-color="#c85000"/></linearGradient></defs><circle cx="8" cy="8" r="7.2" fill="url(#pg)"/><circle cx="8.6" cy="7.4" r="2.8" fill="#fff"/></svg><div class="a nw" style="left:735px;top:3px">Normal</div>
</div>
<div class="a prow" style="top:553px;height:32px"><div class="a" style="left:0;top:0;width:14px;height:32px;background:#ece9d8"></div><div class="a" style="left:14px;top:31px;width:894px;height:1px;background:#bab6a4"></div><div class="a nw pv" style="left:36px;top:2px">Example: Buy a box of hearts, make a list of things like &#x27;a kiss&#x27; or &#x27;a hug&#x27; your guests can &#x27;&#x27;buy&#x27;&#x27; with the hearts. Share hearts with your guests or make them do something to win the</div><div class="a nw pv" style="left:36px;top:16px">hearts.</div></div>
<div class="a grow" style="top:585px"><div class="a minus"></div><div class="a nw" style="left:17px;top:2.3px">Category : 5. One day before</div></div>
<div class="a trow" style="top:603px"><div class="a c1"></div><div class="a c2"></div><div class="a c3"></div><div class="a c4"></div><div class="a chk"></div><div class="a nw" style="left:139px;top:2.3px">Hide valuable or breakable objects</div>
<svg class="a" width="16" height="16" viewBox="0 0 16 16" style="left:715px;top:2px"><defs><linearGradient id="pg" x1="0" y1="0" x2="1" y2="1"><stop offset="0" stop-color="#f8c068"/><stop offset="0.45" stop-color="#e87818"/><stop offset="1" stop-color="#c85000"/></linearGradient></defs><circle cx="8" cy="8" r="7.2" fill="url(#pg)"/><circle cx="8.6" cy="7.4" r="2.8" fill="#fff"/></svg><div class="a nw" style="left:735px;top:2.3px">Normal</div>
</div>
<div class="a trow" style="top:625px"><div class="a c1"></div><div class="a c2"></div><div class="a c3"></div><div class="a c4"></div><div class="a chk"></div><div class="a nw" style="left:139px;top:2.3px">Cook something special if you want to</div>
<svg class="a" width="16" height="16" viewBox="0 0 16 16" style="left:715px;top:2px"><defs><linearGradient id="pg" x1="0" y1="0" x2="1" y2="1"><stop offset="0" stop-color="#f8c068"/><stop offset="0.45" stop-color="#e87818"/><stop offset="1" stop-color="#c85000"/></linearGradient></defs><circle cx="8" cy="8" r="7.2" fill="url(#pg)"/><circle cx="8.6" cy="7.4" r="2.8" fill="#fff"/></svg><div class="a nw" style="left:735px;top:2.3px">Normal</div>
</div>
<div class="a trow" style="top:647px"><div class="a c1"></div><div class="a c2"></div><div class="a c3"></div><div class="a c4"></div><div class="a chk"></div><div class="a nw" style="left:139px;top:2.3px">Clean up and decorate the room</div>
<svg class="a" width="16" height="16" viewBox="0 0 16 16" style="left:715px;top:2px"><defs><linearGradient id="pg" x1="0" y1="0" x2="1" y2="1"><stop offset="0" stop-color="#f8c068"/><stop offset="0.45" stop-color="#e87818"/><stop offset="1" stop-color="#c85000"/></linearGradient></defs><circle cx="8" cy="8" r="7.2" fill="url(#pg)"/><circle cx="8.6" cy="7.4" r="2.8" fill="#fff"/></svg><div class="a nw" style="left:735px;top:2.3px">Normal</div>
</div>
<div class="a trow" style="top:669px"><div class="a c1"></div><div class="a c2"></div><div class="a c3"></div><div class="a c4"></div><div class="a chk"></div><div class="a nw" style="left:139px;top:2.3px">Make sure you have enough chairs</div>
<svg class="a" width="16" height="16" viewBox="0 0 16 16" style="left:715px;top:2px"><defs><linearGradient id="pg" x1="0" y1="0" x2="1" y2="1"><stop offset="0" stop-color="#f8c068"/><stop offset="0.45" stop-color="#e87818"/><stop offset="1" stop-color="#c85000"/></linearGradient></defs><circle cx="8" cy="8" r="7.2" fill="url(#pg)"/><circle cx="8.6" cy="7.4" r="2.8" fill="#fff"/></svg><div class="a nw" style="left:735px;top:2.3px">Normal</div>
</div>
<div class="a trow" style="top:691px"><div class="a c1"></div><div class="a c2"></div><div class="a c3"></div><div class="a c4"></div><div class="a chk"></div><div class="a nw" style="left:139px;top:2.3px">Rent a couple of romantic movies just in case.</div>
<svg class="a" width="16" height="16" viewBox="0 0 16 16" style="left:715px;top:2px"><defs><linearGradient id="pg" x1="0" y1="0" x2="1" y2="1"><stop offset="0" stop-color="#f8c068"/><stop offset="0.45" stop-color="#e87818"/><stop offset="1" stop-color="#c85000"/></linearGradient></defs><circle cx="8" cy="8" r="7.2" fill="url(#pg)"/><circle cx="8.6" cy="7.4" r="2.8" fill="#fff"/></svg><div class="a nw" style="left:735px;top:2.3px">Normal</div>
</div>
<div class="a grow" style="top:713px"><div class="a minus"></div><div class="a nw" style="left:17px;top:2.3px">Category : 6. On Valentine&#x27;s day</div></div>
<div class="a trow" style="top:731px"><div class="a c1"></div><div class="a c2"></div><div class="a c3"></div><div class="a c4"></div><div class="a chk"></div><div class="a nw" style="left:139px;top:2.3px">Lay out food, drinks, cups and plates.</div>
<svg class="a" width="16" height="16" viewBox="0 0 16 16" style="left:715px;top:2px"><defs><linearGradient id="pg" x1="0" y1="0" x2="1" y2="1"><stop offset="0" stop-color="#f8c068"/><stop offset="0.45" stop-color="#e87818"/><stop offset="1" stop-color="#c85000"/></linearGradient></defs><circle cx="8" cy="8" r="7.2" fill="url(#pg)"/><circle cx="8.6" cy="7.4" r="2.8" fill="#fff"/></svg><div class="a nw" style="left:735px;top:2.3px">Normal</div>
</div>
<div class="a trow" style="top:753px"><div class="a c1"></div><div class="a c2"></div><div class="a c3"></div><div class="a c4"></div><div class="a chk"></div><div class="a nw" style="left:139px;top:2.3px">Relax and enjoy your party!</div>
<svg class="a" width="16" height="16" viewBox="0 0 16 16" style="left:715px;top:2px"><path d="M8 1.5 L15 14.5 H1Z" fill="#f8c830" stroke="#c89010" stroke-width="0.8"/><rect x="7.2" y="5.5" width="1.6" height="5" fill="#a02000"/><rect x="7.2" y="11.5" width="1.6" height="1.6" fill="#a02000"/></svg><div class="a nw" style="left:735px;top:2.3px">Urgent</div>
</div>
</div>
<div class="a" style="left:186px;top:775px;width:908px;height:1px;background:#d6d2c2"></div>
<div id="footer" class="a"><div class="a fcell"><span class="a" style="left:3px;top:3px">21</span></div></div>
<div id="tabs" class="a"><div class="a tab"><span class="a nw" style="left:2px;top:5px">Search result</span></div></div>
<div class="a phdr" style="top:88px"><div class="a nw" style="left:2px;top:3px">Categories Bar</div></div>
<div class="a" style="left:1229px;top:92px;width:12px;height:12px;background:#1a5ae8;border-radius:2px"><div class="a" style="left:2px;top:2px;width:8px;height:8px;box-sizing:border-box;border:2px solid #fff;background:#2a6ae8"></div></div>
<svg class="a" width="11" height="13" viewBox="0 0 11 13" style="left:1246px;top:92px"><path d="M2 1 H9 M3 1.5 L2.5 7 H8.5 L8 1.5 M0.5 7.5 H10.5 M5.5 8 V12.5" stroke="#1a4ad8" stroke-width="1.7" fill="none"/><path d="M4.5 2.5 V6" stroke="#a8c0f8" stroke-width="1.2"/></svg>
<div class="a" style="left:1261px;top:92px;width:12px;height:12px;background:#e0600a;border-radius:1px"><svg class="a" width="12" height="12" viewBox="0 0 12 12" style="left:0;top:0"><path d="M3 3 L9 9 M9 3 L3 9" stroke="#fff" stroke-width="2.2"/></svg></div>
<div id="tree" class="a"></div>
<div class="a" style="left:1107px;top:121px;width:0;height:90px;border-left:1px dotted #a0a0a0"></div>
<div class="a" style="left:1108px;top:121px;width:10px;height:0;border-top:1px dotted #a0a0a0"></div>
<div class="a nw" style="left:1139px;top:115px;letter-spacing:0.1px">1. Four weeks before</div>
<div class="a" style="left:1108px;top:139px;width:10px;height:0;border-top:1px dotted #a0a0a0"></div>
<div class="a nw" style="left:1139px;top:133px;letter-spacing:0.1px">2. Three weeks before</div>
<div class="a" style="left:1108px;top:157px;width:10px;height:0;border-top:1px dotted #a0a0a0"></div>
<div class="a nw" style="left:1139px;top:151px;letter-spacing:0.1px">3. Two weeks before</div>
<div class="a" style="left:1108px;top:175px;width:10px;height:0;border-top:1px dotted #a0a0a0"></div>
<div class="a nw" style="left:1139px;top:169px;letter-spacing:0.1px">4. One week before</div>
<div class="a" style="left:1108px;top:193px;width:10px;height:0;border-top:1px dotted #a0a0a0"></div>
<div class="a nw" style="left:1139px;top:187px;letter-spacing:0.1px">5. One day before</div>
<div class="a" style="left:1108px;top:211px;width:10px;height:0;border-top:1px dotted #a0a0a0"></div>
<div class="a nw" style="left:1139px;top:205px;letter-spacing:0.1px">6. On Valentine&#x27;s day</div>
<svg class="a" width="17" height="17" viewBox="0 0 16 16" style="left:1120px;top:113px"><circle cx="5" cy="5" r="3" fill="#e8903a"/><circle cx="11" cy="5" r="3" fill="#6a4a2a"/><rect x="1" y="9" width="7" height="6" fill="#3a6ad8"/><rect x="8" y="9" width="7" height="6" fill="#2a9a3a"/></svg>
<svg class="a" width="17" height="17" viewBox="0 0 16 16" style="left:1120px;top:131px"><path d="M1 5 Q8 1 15 4 L13 14 Q7 11 2 13Z" fill="#f4f0e8" stroke="#e07a3a" stroke-width="1.2"/><path d="M8 3 V12" stroke="#7a9ad0"/></svg>
<svg class="a" width="17" height="17" viewBox="0 0 16 16" style="left:1120px;top:149px"><rect x="3" y="2" width="10" height="13" fill="#f0ede0" stroke="#8a6a4a" stroke-width="1.2"/><rect x="6" y="0.5" width="4" height="3" fill="#888"/><rect x="7" y="7" width="3" height="4" fill="#888"/></svg>
<svg class="a" width="17" height="17" viewBox="0 0 16 16" style="left:1120px;top:167px"><ellipse cx="8" cy="9" rx="7.5" ry="5" fill="#f0a040" stroke="#b86a20" stroke-width="0.8"/><circle cx="5" cy="8" r="1.5" fill="#3a7ad8"/><circle cx="9" cy="7" r="1.5" fill="#2a9a3a"/><circle cx="11" cy="11" r="1.5" fill="#d83a3a"/></svg>
<svg class="a" width="17" height="17" viewBox="0 0 16 16" style="left:1120px;top:185px"><path d="M2 1 V15" stroke="#333" stroke-width="1.5"/><path d="M3 2 Q7 0 9 3 Q12 5 15 2 V10 Q12 13 9 10 Q7 8 3 10Z" fill="#4a7ae0" stroke="#1a3a98" stroke-width="0.7"/></svg>
<svg class="a" width="17" height="17" viewBox="0 0 16 16" style="left:1120px;top:203px"><circle cx="8" cy="8" r="7" fill="#f8c020" stroke="#d09010" stroke-width="0.8"/><circle cx="5.5" cy="6" r="1.2" fill="#000"/><circle cx="10.5" cy="6" r="1.2" fill="#000"/><path d="M4 9 Q8 14 12 9Z" fill="#802000"/></svg>
<div class="a phdr blue" style="top:343px"><div class="a nw" style="left:2px;top:3px">Filters Bar</div></div>
<div class="a" style="left:1229px;top:347px;width:12px;height:12px;background:#1a5ae8;border-radius:2px"><div class="a" style="left:2px;top:2px;width:8px;height:8px;box-sizing:border-box;border:2px solid #fff;background:#2a6ae8"></div></div>
<svg class="a" width="11" height="13" viewBox="0 0 11 13" style="left:1246px;top:347px"><path d="M2 1 H9 M3 1.5 L2.5 7 H8.5 L8 1.5 M0.5 7.5 H10.5 M5.5 8 V12.5" stroke="#1a4ad8" stroke-width="1.7" fill="none"/><path d="M4.5 2.5 V6" stroke="#a8c0f8" stroke-width="1.2"/></svg>
<div class="a" style="left:1261px;top:347px;width:12px;height:12px;background:#e0600a;border-radius:1px"><svg class="a" width="12" height="12" viewBox="0 0 12 12" style="left:0;top:0"><path d="M3 3 L9 9 M9 3 L3 9" stroke="#fff" stroke-width="2.2"/></svg></div>
<div class="a nw b" style="left:1106px;top:373px">Filter By Done:</div>
<div class="a combo" style="left:1105px;top:390px;width:121px;height:21px"><span class="a nw" style="left:3px;top:4px">All</span><div class="a ddb hd" style="left:102px;top:2px;width:15px;height:15px"></div></div>
<div class="a nw b" style="left:1106px;top:421px">Filter By Due Date:</div>
<svg class="a" width="6" height="9" viewBox="0 0 6 9" style="left:1107px;top:446px"><path d="M5 0 V9 L0 4.5Z" fill="#000"/></svg>
<svg class="a" width="6" height="9" viewBox="0 0 6 9" style="left:1242px;top:446px"><path d="M0 0 V9 L5 4.5Z" fill="#000"/></svg>
<div class="a nw" style="left:1145px;top:444px">Январь 2006</div>
<div class="a" style="left:1102px;top:458px;width:150px;height:1px;background:#000"></div>
<div class="a nw" style="left:1114px;width:20px;text-align:center;top:461px;transform-origin:50% 0">П</div>
<div class="a nw" style="left:1132px;width:20px;text-align:center;top:461px;transform-origin:50% 0">В</div>
<div class="a nw" style="left:1151px;width:20px;text-align:center;top:461px;transform-origin:50% 0">С</div>
<div class="a nw" style="left:1169px;width:20px;text-align:center;top:461px;transform-origin:50% 0">Ч</div>
<div class="a nw" style="left:1187px;width:20px;text-align:center;top:461px;transform-origin:50% 0">П</div>
<div class="a nw" style="left:1205px;width:20px;text-align:center;top:461px;transform-origin:50% 0">С</div>
<div class="a nw" style="left:1223px;width:20px;text-align:center;top:461px;transform-origin:50% 0">В</div>
<div class="a" style="left:1114px;top:474px;width:126px;height:1px;background:#aca899"></div>
<div class="a nw" style="left:1108px;width:20px;text-align:right;top:477px;transform-origin:100% 0;color:#aca899;">26</div>
<div class="a nw" style="left:1126px;width:20px;text-align:right;top:477px;transform-origin:100% 0;color:#aca899;">27</div>
<div class="a nw" style="left:1144px;width:20px;text-align:right;top:477px;transform-origin:100% 0;color:#aca899;">28</div>
<div class="a nw" style="left:1161px;width:20px;text-align:right;top:477px;transform-origin:100% 0;color:#aca899;">29</div>
<div class="a nw" style="left:1179px;width:20px;text-align:right;top:477px;transform-origin:100% 0;color:#aca899;">30</div>
<div class="a nw" style="left:1197px;width:20px;text-align:right;top:477px;transform-origin:100% 0;color:#aca899;">31</div>
<div class="a nw" style="left:1215px;width:20px;text-align:right;top:477px;transform-origin:100% 0;">1</div>
<div class="a nw" style="left:1108px;width:20px;text-align:right;top:492px;transform-origin:100% 0;">2</div>
<div class="a nw" style="left:1126px;width:20px;text-align:right;top:492px;transform-origin:100% 0;">3</div>
<div class="a nw" style="left:1144px;width:20px;text-align:right;top:492px;transform-origin:100% 0;">4</div>
<div class="a nw" style="left:1161px;width:20px;text-align:right;top:492px;transform-origin:100% 0;">5</div>
<div class="a nw" style="left:1179px;width:20px;text-align:right;top:492px;transform-origin:100% 0;">6</div>
<div class="a nw" style="left:1197px;width:20px;text-align:right;top:492px;transform-origin:100% 0;">7</div>
<div class="a nw" style="left:1215px;width:20px;text-align:right;top:492px;transform-origin:100% 0;">8</div>
<div class="a nw" style="left:1108px;width:20px;text-align:right;top:507px;transform-origin:100% 0;">9</div>
<div class="a nw" style="left:1126px;width:20px;text-align:right;top:507px;transform-origin:100% 0;">10</div>
<div class="a nw" style="left:1144px;width:20px;text-align:right;top:507px;transform-origin:100% 0;">11</div>
<div class="a nw" style="left:1161px;width:20px;text-align:right;top:507px;transform-origin:100% 0;">12</div>
<div class="a nw" style="left:1179px;width:20px;text-align:right;top:507px;transform-origin:100% 0;">13</div>
<div class="a nw" style="left:1197px;width:20px;text-align:right;top:507px;transform-origin:100% 0;">14</div>
<div class="a nw" style="left:1215px;width:20px;text-align:right;top:507px;transform-origin:100% 0;">15</div>
<div class="a nw" style="left:1108px;width:20px;text-align:right;top:522px;transform-origin:100% 0;">16</div>
<div class="a nw" style="left:1126px;width:20px;text-align:right;top:522px;transform-origin:100% 0;">17</div>
<div class="a" style="left:1150px;top:521px;width:18px;height:15px;background:#316ac5;border:1px solid #c04010;box-sizing:border-box"></div>
<div class="a nw" style="left:1144px;width:20px;text-align:right;top:522px;transform-origin:100% 0;color:#fff;">18</div>
<div class="a nw" style="left:1161px;width:20px;text-align:right;top:522px;transform-origin:100% 0;">19</div>
<div class="a nw" style="left:1179px;width:20px;text-align:right;top:522px;transform-origin:100% 0;">20</div>
<div class="a nw" style="left:1197px;width:20px;text-align:right;top:522px;transform-origin:100% 0;">21</div>
<div class="a nw" style="left:1215px;width:20px;text-align:right;top:522px;transform-origin:100% 0;">22</div>
<div class="a nw" style="left:1108px;width:20px;text-align:right;top:537px;transform-origin:100% 0;">23</div>
<div class="a nw" style="left:1126px;width:20px;text-align:right;top:537px;transform-origin:100% 0;">24</div>
<div class="a nw" style="left:1144px;width:20px;text-align:right;top:537px;transform-origin:100% 0;">25</div>
<div class="a nw" style="left:1161px;width:20px;text-align:right;top:537px;transform-origin:100% 0;">26</div>
<div class="a nw" style="left:1179px;width:20px;text-align:right;top:537px;transform-origin:100% 0;">27</div>
<div class="a nw" style="left:1197px;width:20px;text-align:right;top:537px;transform-origin:100% 0;">28</div>
<div class="a nw" style="left:1215px;width:20px;text-align:right;top:537px;transform-origin:100% 0;">29</div>
<div class="a nw" style="left:1108px;width:20px;text-align:right;top:552px;transform-origin:100% 0;">30</div>
<div class="a nw" style="left:1126px;width:20px;text-align:right;top:552px;transform-origin:100% 0;">31</div>
<div class="a nw" style="left:1144px;width:20px;text-align:right;top:552px;transform-origin:100% 0;color:#aca899;">1</div>
<div class="a nw" style="left:1161px;width:20px;text-align:right;top:552px;transform-origin:100% 0;color:#aca899;">2</div>
<div class="a nw" style="left:1179px;width:20px;text-align:right;top:552px;transform-origin:100% 0;color:#aca899;">3</div>
<div class="a nw" style="left:1197px;width:20px;text-align:right;top:552px;transform-origin:100% 0;color:#aca899;">4</div>
<div class="a nw" style="left:1215px;width:20px;text-align:right;top:552px;transform-origin:100% 0;color:#aca899;">5</div>
<div class="a" style="left:1114px;top:566px;width:126px;height:1px;background:#aca899"></div>
<div class="a btn" style="left:1121px;top:572px;width:47px;height:20px"><span class="a nw" style="left:0;width:45px;text-align:center;top:3px;transform:none">Today</span></div>
<div class="a btn" style="left:1186px;top:572px;width:48px;height:20px"><span class="a nw" style="left:0;width:46px;text-align:center;top:3px;transform:none">Clear</span></div>
<div class="a combo" style="left:1105px;top:606px;width:145px;height:21px"><span class="a nw" style="left:3px;top:3px">is less than or equal to</span><div class="a ddb hd" style="left:126px;top:2px;width:15px;height:15px"></div></div>
<div class="a" style="left:1278px;top:84px;width:1px;height:919px;background:#c8c4b4"></div>
<div id="status" class="a"></div>
<div id="bottomblue" class="a"></div>
</div></body></html>
